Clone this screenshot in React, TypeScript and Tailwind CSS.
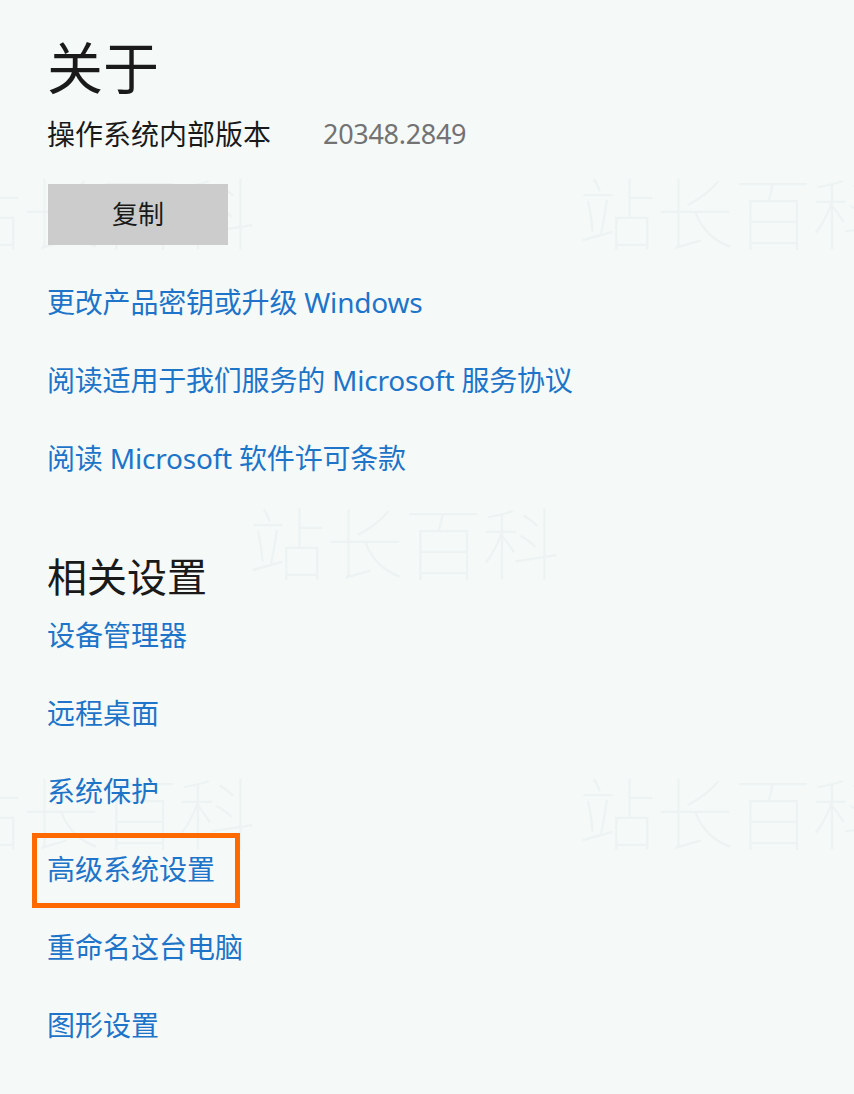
import React from "react";

const font = { fontFamily: '"Noto Sans", "Noto Sans CJK SC", sans-serif' };

const Watermark = ({ className }: { className: string }) => (
  <div
    aria-hidden="true"
    className={`absolute pointer-events-none select-none whitespace-nowrap text-[78px] leading-[80px] font-thin text-[#edf3f2] ${className}`}
    style={{ fontFamily: '"Noto Sans CJK SC", sans-serif' }}
  >
    站长百科
  </div>
);

const Link = ({ children }: { children: React.ReactNode }) => (
  <a className="block text-[28px] leading-[28px] text-[#1d74c8] whitespace-nowrap cursor-pointer">{children}</a>
);

export default function App() {
  return (
    <div
      className="relative w-[854px] h-[1094px] overflow-hidden bg-[#f5faf9] pl-[47px] pt-[39px]"
      style={font}
    >
      <Watermark className="left-[-56px] top-[170px]" />
      <Watermark className="left-[578px] top-[170px]" />
      <Watermark className="left-[248px] top-[500px]" />
      <Watermark className="left-[-56px] top-[770px]" />
      <Watermark className="left-[578px] top-[770px]" />

      <div className="relative">
        <h1 className="text-[56px] leading-[56px] text-[#1a1a1a]">关于</h1>

        <div className="mt-[25px] flex items-center text-[28px] leading-[28px]">
          <span className="text-[#1a1a1a] w-[276px]">操作系统内部版本</span>
          <span className="text-[#737373] text-[27px] tracking-[-0.3px]">20348.2849</span>
        </div>

        <button className="mt-[36px] ml-[1px] w-[180px] h-[61px] bg-[#cccccc] text-[26px] text-[#1a1a1a] flex items-center justify-center">
          复制
        </button>

        <div className="mt-[43px] flex flex-col gap-[50px] tracking-[-0.2px]">
          <Link>更改产品密钥或升级 Windows</Link>
          <Link>阅读适用于我们服务的 Microsoft 服务协议</Link>
          <Link>阅读 Microsoft 软件许可条款</Link>
        </div>

        <h2 className="mt-[85px] text-[40px] leading-[40px] text-[#1a1a1a]">相关设置</h2>

        <div className="mt-[24px] flex flex-col gap-[50px]">
          <Link>设备管理器</Link>
          <Link>远程桌面</Link>
          <Link>系统保护</Link>
          <div className="relative">
            <Link>高级系统设置</Link>
            <span className="absolute left-[-15px] top-[-22px] w-[208px] h-[75px] border-[5px] border-[#ff6a00]" />
          </div>
          <Link>重命名这台电脑</Link>
          <Link>图形设置</Link>
        </div>
      </div>
    </div>
  );
}
